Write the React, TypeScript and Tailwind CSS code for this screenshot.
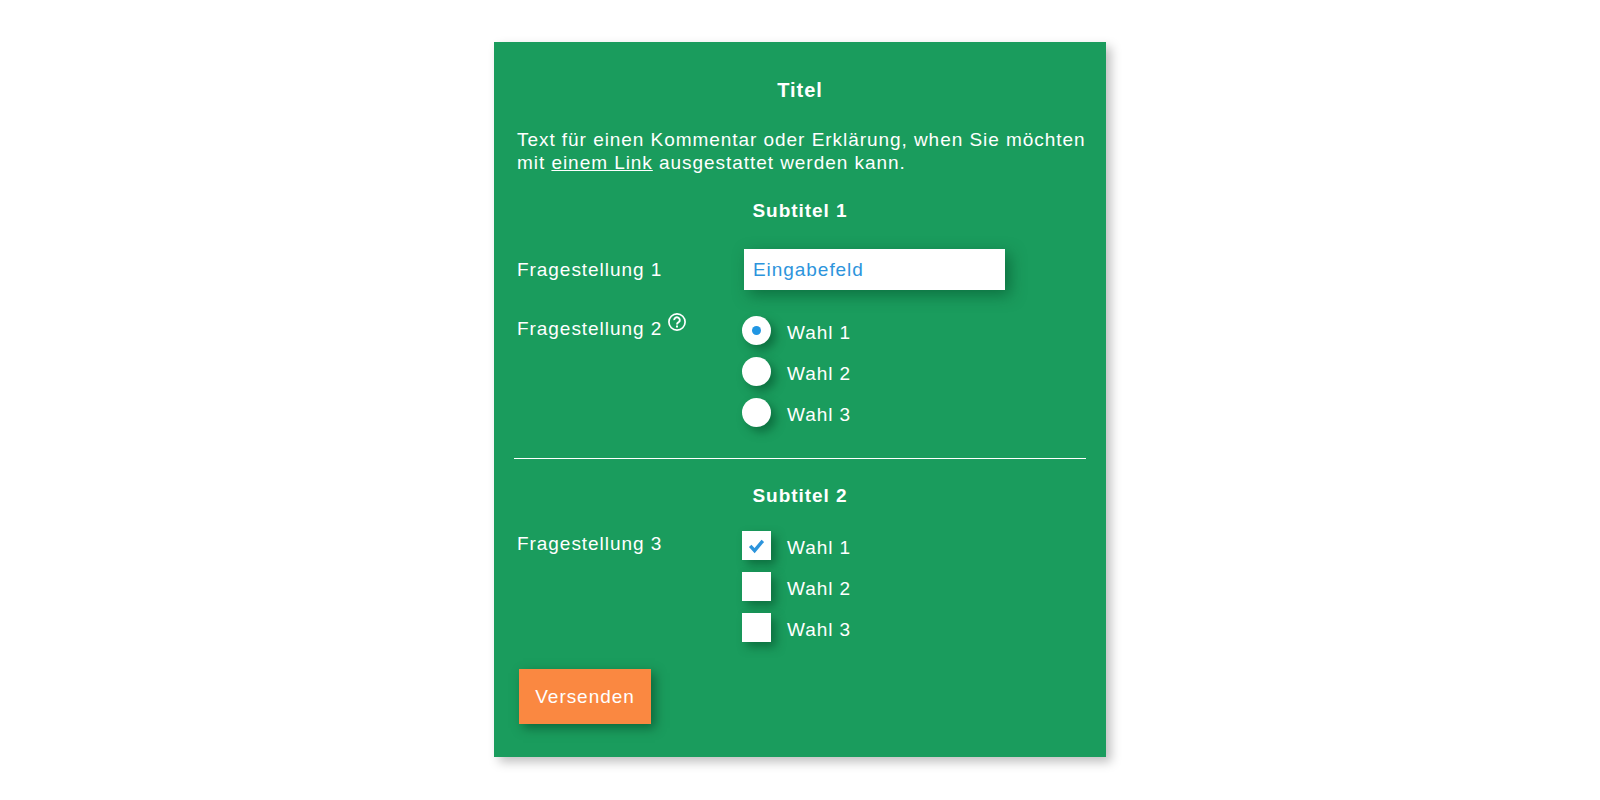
import React, { useState } from "react";

const choices = ["Wahl 1", "Wahl 2", "Wahl 3"];

interface ChoiceProps {
  label: string;
  checked: boolean;
  onChange: () => void;
}

const HelpIcon = () => (
  <svg viewBox="0 0 18 18" className="size-[18px]" fill="none" stroke="currentColor" strokeWidth="1.7">
    <circle cx="9" cy="9" r="8.1" />
    <path d="M6.2 7.2 A2.8 2.7 0 1 1 10.6 9.2 C9.5 10 9 10.3 9 11.4" strokeWidth="1.9" />
    <path d="M9 12.5 V14.4" strokeWidth="2" />
  </svg>
);

const RadioChoice: React.FC<ChoiceProps> = ({ label, checked, onChange }) => (
  <label className="flex items-center gap-4 cursor-pointer">
    <span className="grid place-items-center">
      <input
        type="radio"
        name="frage2"
        checked={checked}
        onChange={onChange}
        className="peer col-start-1 row-start-1 size-[29px] appearance-none rounded-full bg-white shadow-[5px_5px_10px_rgba(0,70,35,0.5)]"
      />
      <span className="pointer-events-none z-10 col-start-1 row-start-1 hidden size-[9px] rounded-full bg-[#2196e3] peer-checked:block" />
    </span>
    <span className="pt-[3px]">{label}</span>
  </label>
);

const CheckChoice: React.FC<ChoiceProps> = ({ label, checked, onChange }) => (
  <label className="flex items-center gap-4 cursor-pointer">
    <span className="grid place-items-center">
      <input
        type="checkbox"
        checked={checked}
        onChange={onChange}
        className="peer col-start-1 row-start-1 size-[29px] appearance-none bg-white shadow-[5px_5px_10px_rgba(0,70,35,0.5)]"
      />
      <svg
        viewBox="0 0 29 29"
        className="pointer-events-none z-10 col-start-1 row-start-1 hidden size-[29px] peer-checked:block"
        fill="none"
        stroke="#2d94dc"
        strokeWidth="3.4"
      >
        <path d="M8.2 14.8 L12.6 19.6 L20.8 9.8" />
      </svg>
    </span>
    <span className="pt-[3px]">{label}</span>
  </label>
);

export default function App() {
  const [radio, setRadio] = useState(0);
  const [checks, setChecks] = useState([true, false, false]);

  const toggle = (i: number) => setChecks(checks.map((c, n) => (n === i ? !c : c)));

  return (
    <main className="px-4 py-[42px] font-['Liberation_Sans',Arial,sans-serif] text-[19px] leading-[23px] tracking-wider text-white">
      <form
        onSubmit={(e) => e.preventDefault()}
        className="mx-auto w-full max-w-[612px] bg-[#1a9c5d] px-5 pt-9 pb-[33px] shadow-[5px_5px_10px_rgba(0,0,0,0.25)]"
      >
        <h1 className="text-center text-xl leading-6 font-bold">Titel</h1>
        <p className="-mr-3 mt-[26px] pl-[3px]">
          Text für einen Kommentar oder Erklärung, when Sie möchten mit{" "}
          <a href="#" className="underline">einem Link</a> ausgestattet werden kann.
        </p>

        <h2 className="mt-[25px] text-center font-bold">Subtitel 1</h2>
        <div className="mt-[27px] flex items-center pl-[3px]">
          <label htmlFor="frage1" className="w-[227px]">Fragestellung 1</label>
          <input
            id="frage1"
            type="text"
            placeholder="Eingabefeld"
            className="h-[41px] w-[261px] bg-white px-[9px] tracking-wider text-[#2d94dc] shadow-[5px_5px_15px_rgba(0,70,35,0.5)] placeholder:text-[#2d94dc]"
          />
        </div>
        <div className="mt-[26px] flex items-start pl-[3px]" role="radiogroup" aria-labelledby="frage2">
          <div className="flex w-[225px] gap-[6px]">
            <span id="frage2" className="pt-px">Fragestellung 2</span>
            <button type="button" aria-label="Hilfe" className="-mt-[3px] cursor-pointer self-start">
              <HelpIcon />
            </button>
          </div>
          <div className="flex flex-col gap-3">
            {choices.map((c, i) => (
              <RadioChoice key={c} label={c} checked={radio === i} onChange={() => setRadio(i)} />
            ))}
          </div>
        </div>

        <hr className="mt-[31px] border-white" />

        <h2 className="mt-[25px] text-center font-bold">Subtitel 2</h2>
        <div className="mt-6 flex items-start pl-[3px]" role="group" aria-labelledby="frage3">
          <span id="frage3" className="w-[225px] pt-px">Fragestellung 3</span>
          <div className="flex flex-col gap-3">
            {choices.map((c, i) => (
              <CheckChoice key={c} label={c} checked={checks[i]} onChange={() => toggle(i)} />
            ))}
          </div>
        </div>

        <button
          type="submit"
          className="mt-[27px] ml-[5px] block h-[55px] w-[132px] cursor-pointer bg-[#fa8841] tracking-wider shadow-[4px_4px_10px_rgba(0,50,25,0.5)]"
        >
          Versenden
        </button>
      </form>
    </main>
  );
}
